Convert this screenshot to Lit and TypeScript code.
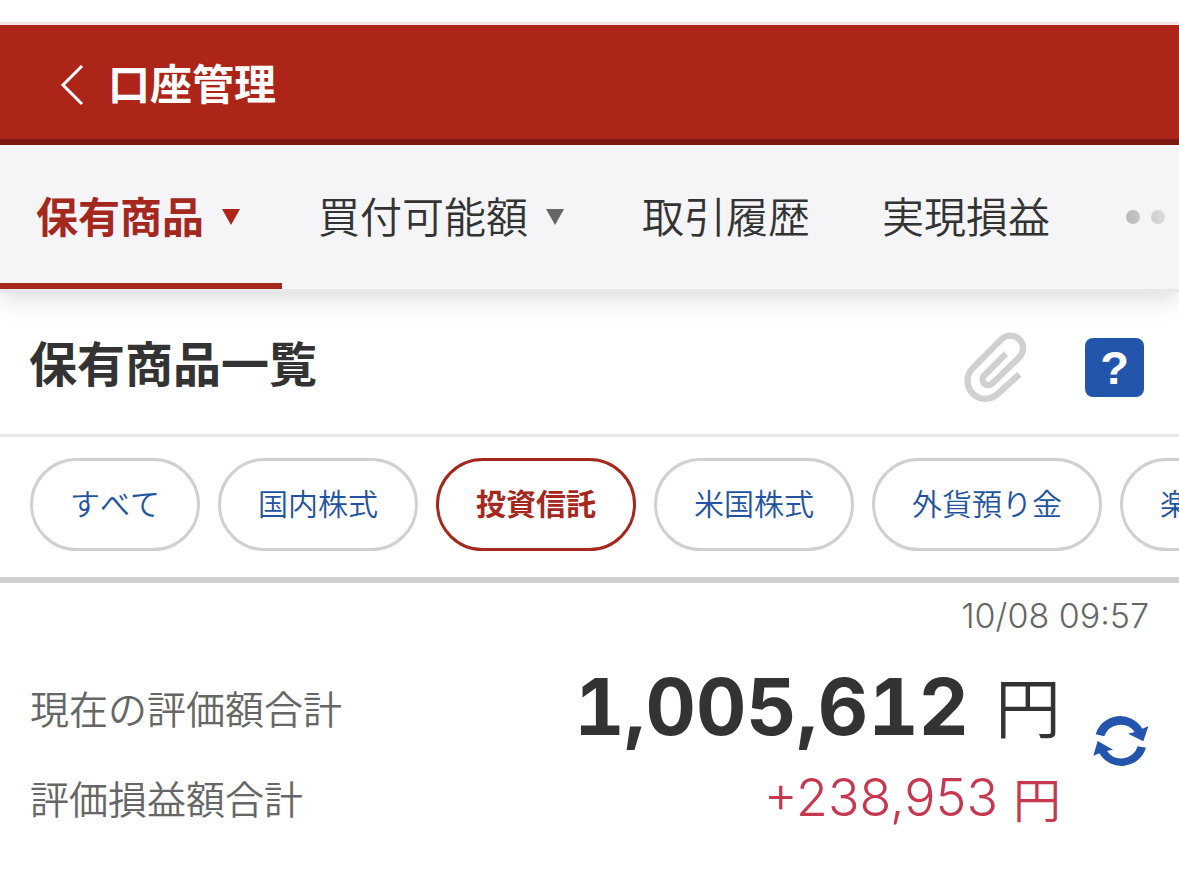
import { LitElement, html, css, svg } from "lit";
import { customElement, property, state } from "lit/decorators.js";
import { classMap } from "lit/directives/class-map.js";

interface Tab {
  label: string;
  menu: boolean;
}

const TABS: Tab[] = [
  { label: "保有商品", menu: true },
  { label: "買付可能額", menu: true },
  { label: "取引履歴", menu: false },
  { label: "実現損益", menu: false },
];

const FILTERS = ["すべて", "国内株式", "投資信託", "米国株式", "外貨預り金", "楽ラップ"];

const backIcon = svg`<path d="M22 2 L3 21 L22 40" fill="none" stroke="currentColor" stroke-width="3"/>`;

const clipIcon = svg`<path d="M268 194 L205 251 A53 53 0 0 1 128 176 L214 89 A38 38 0 0 1 268 143 L186 222 A17 17 0 0 1 162 198 L228 132"
  fill="none" stroke="currentColor" stroke-width="19"/>`;

const refreshIcon = svg`
  <g fill="currentColor">
    <path d="M77 132 A77 77 0 0 1 217 115 L235 108 L220 153 L174 130 L194 125 A52 52 0 0 0 103 138 Z"/>
    <path d="M228 172 A77 77 0 0 1 88 189 L70 196 L83 152 L129 178 L111 182 A52 52 0 0 0 203 168 Z"/>
  </g>`;

@customElement("page-header")
class PageHeader extends LitElement {
  @property() heading = "";

  static styles = css`
    :host {
      display: block;
      position: relative;
      z-index: 1;
      border-top: 3px solid #f4e4e3;
    }
    .bar {
      display: flex;
      align-items: center;
      gap: 24px;
      height: 114px;
      padding: 0 60px;
      box-sizing: border-box;
      background: #ad2419;
      color: #fff;
    }
    .edge {
      height: 6px;
      background: #7f1a12;
    }
    .back {
      display: flex;
      margin-top: 6px;
      padding: 0;
      border: 0;
      background: none;
      color: inherit;
    }
    h1 {
      margin: 0;
      font-size: 42px;
      line-height: 60px;
      font-weight: 700;
    }
  `;

  render() {
    return html`
      <header class="bar">
        <button class="back" type="button" aria-label="戻る">
          <svg width="24" height="42" viewBox="0 0 24 42">${backIcon}</svg>
        </button>
        <h1>${this.heading}</h1>
      </header>
      <div class="edge"></div>
    `;
  }
}

@customElement("tab-bar")
class TabBar extends LitElement {
  @property({ attribute: false }) tabs: Tab[] = [];
  @state() private active = 0;

  static styles = css`
    :host {
      display: block;
      position: relative;
      box-shadow: 0 6px 24px rgba(0, 0, 0, 0.15);
    }
    .tabs {
      display: flex;
      overflow: hidden;
      height: 144px;
      background: #f5f5f8;
      border-bottom: 3px solid #e8e8e9;
    }
    .tab {
      flex: none;
      display: flex;
      align-items: center;
      gap: 18px;
      padding: 2px 36px 0;
      border: 0;
      border-bottom: 6px solid transparent;
      background: none;
      color: #333;
      font: 350 42px/60px "Noto Sans CJK JP", sans-serif;
    }
    .menu {
      padding-right: 42px;
    }
    .active {
      color: #a5281f;
      border-bottom-color: #a5281f;
      font-weight: 700;
    }
    .caret {
      width: 18px;
      height: 16px;
      margin-top: 4px;
      background: #666;
      clip-path: polygon(0 0, 100% 0, 50% 100%);
    }
    .active .caret {
      background: #ad2419;
    }
    .more {
      gap: 11px;
      padding: 6px 40px 0;
    }
    .dot {
      width: 14px;
      height: 14px;
      border-radius: 50%;
      background: #999;
    }
    .fade {
      position: absolute;
      top: 0;
      right: 0;
      width: 90px;
      height: 144px;
      background: linear-gradient(to right, rgba(245, 245, 248, 0), #f5f5f8);
      opacity: 0.85;
      pointer-events: none;
    }
  `;

  render() {
    return html`
      <nav class="tabs">
        ${this.tabs.map(
          (tab, i) => html`
            <button
              type="button"
              class=${classMap({ tab: true, menu: tab.menu, active: i === this.active })}
              @click=${() => (this.active = i)}
            >
              ${tab.label}${tab.menu ? html`<span class="caret"></span>` : null}
            </button>
          `
        )}
        <button type="button" class="tab more" aria-label="その他">
          <span class="dot"></span><span class="dot"></span>
        </button>
      </nav>
      <div class="fade"></div>
    `;
  }
}

@customElement("filter-chips")
class FilterChips extends LitElement {
  @property({ attribute: false }) items: string[] = [];
  @state() private selected = 2;

  static styles = css`
    :host {
      display: block;
      border-top: 3px solid #e8e8e8;
      border-bottom: 6px solid #d0d0d0;
    }
    .row {
      display: flex;
      gap: 18px;
      overflow: hidden;
      padding: 21px 30px 26px;
    }
    .chip {
      flex: none;
      height: 93px;
      padding: 0 37px 4px;
      border: 3px solid #d0d0d0;
      border-radius: 47px;
      background: #fff;
      color: #2253a0;
      font: 350 30px/45px "Noto Sans CJK JP", sans-serif;
      font-kerning: none;
    }
    .selected {
      border-color: #a5281f;
      color: #a5281f;
      font-weight: 700;
    }
  `;

  render() {
    return html`
      <div class="row">
        ${this.items.map(
          (item, i) => html`
            <button
              type="button"
              class=${classMap({ chip: true, selected: i === this.selected })}
              @click=${() => (this.selected = i)}
            >${item}</button>
          `
        )}
      </div>
    `;
  }
}

@customElement("asset-summary")
class AssetSummary extends LitElement {
  static styles = css`
    :host {
      display: block;
      padding: 9px 30px 36px;
    }
    .time {
      display: block;
      text-align: right;
      color: #666;
      font: 300 34px/48px Inter, "Noto Sans CJK JP", sans-serif;
    }
    .body {
      display: flex;
      align-items: flex-start;
      gap: 32px;
      margin-top: 24px;
    }
    .figures {
      flex: 1;
      margin: 0;
    }
    .line {
      display: flex;
      align-items: center;
      justify-content: space-between;
      height: 86px;
      padding-bottom: 4px;
    }
    dt {
      color: #666;
      font-size: 39px;
      line-height: 60px;
      font-weight: 350;
    }
    dd {
      display: flex;
      align-items: center;
      margin: 0;
      font-weight: 350;
    }
    .total {
      gap: 26px;
      color: #333;
      font-size: 66px;
      line-height: 84px;
    }
    .total .num {
      font-family: Inter, sans-serif;
      font-size: 78px;
      font-weight: 700;
      font-variant-numeric: tabular-nums;
    }
    .total .unit {
      padding-bottom: 6px;
    }
    .gain {
      gap: 15px;
      color: #c7384f;
      font-size: 48px;
      line-height: 72px;
    }
    .gain .num {
      padding-top: 2px;
      font-family: Inter, sans-serif;
      font-size: 52px;
      font-weight: 300;
    }
    .refresh {
      display: flex;
      margin-top: 49px;
      padding: 0;
      border: 0;
      background: none;
      color: #2455ac;
    }
  `;

  render() {
    return html`
      <time class="time">10/08 09:57</time>
      <div class="body">
        <dl class="figures">
          <div class="line">
            <dt>現在の評価額合計</dt>
            <dd class="total"><span class="num">1,005,612</span><span class="unit">円</span></dd>
          </div>
          <div class="line">
            <dt>評価損益額合計</dt>
            <dd class="gain"><span class="num">+238,953</span><span class="unit">円</span></dd>
          </div>
        </dl>
        <button class="refresh" type="button" aria-label="更新">
          <svg width="56" height="56" viewBox="69 68 168 168">${refreshIcon}</svg>
        </button>
      </div>
    `;
  }
}

@customElement("app-root")
class AppRoot extends LitElement {
  static styles = css`
    :host {
      display: block;
      min-height: 100vh;
      padding-top: 22px;
      box-sizing: border-box;
      overflow: hidden;
      background: #fff;
      color: #333;
      font-family: "Noto Sans CJK JP", sans-serif;
    }
    .title {
      display: flex;
      align-items: center;
      height: 142px;
      padding: 0 35px 0 29px;
    }
    h2 {
      flex: 1;
      margin: 0;
      padding-bottom: 4px;
      font-size: 48px;
      line-height: 72px;
      font-weight: 700;
    }
    .clip,
    .help {
      display: flex;
      padding: 0;
      border: 0;
      background: none;
    }
    .clip {
      margin: 8px 58px 0 0;
      color: #d0d0d0;
    }
    .help {
      align-items: center;
      justify-content: center;
      width: 59px;
      height: 59px;
      margin-top: 9px;
      border-radius: 8px;
      background: #2455ac;
      color: #fff;
      font: 700 47px/59px "Liberation Sans", sans-serif;
    }
  `;

  render() {
    return html`
      <page-header heading="口座管理"></page-header>
      <tab-bar .tabs=${TABS}></tab-bar>
      <main>
        <div class="title">
          <h2>保有商品一覧</h2>
          <button class="clip" type="button" aria-label="添付">
            <svg width="63" height="70" viewBox="102 67 189 210">${clipIcon}</svg>
          </button>
          <button class="help" type="button">?</button>
        </div>
        <filter-chips .items=${FILTERS}></filter-chips>
        <asset-summary></asset-summary>
      </main>
    `;
  }
}
